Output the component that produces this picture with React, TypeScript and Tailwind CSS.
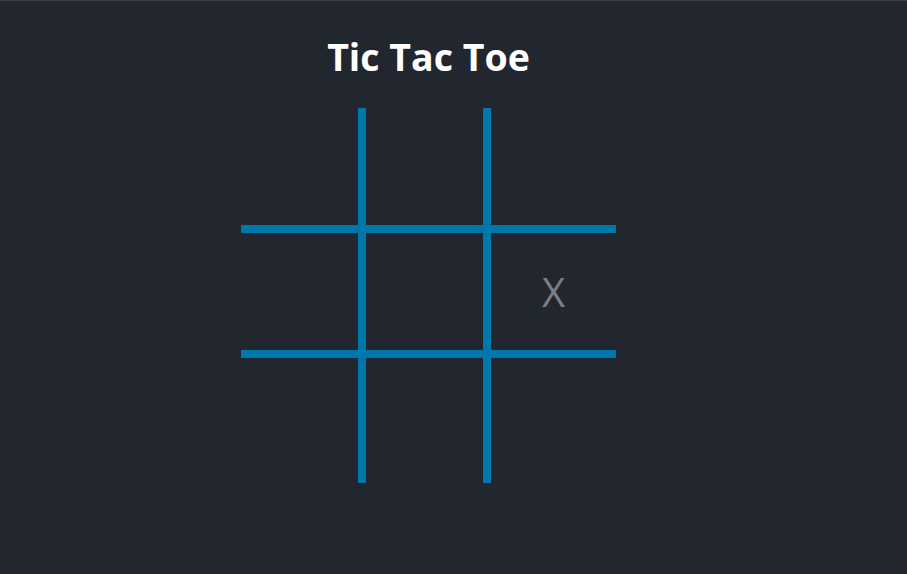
import React from "react";

const cells = ["", "", "", "", "", "X", "", "", ""];

export default function App() {
  return (
    <div className="min-h-[574px] w-full bg-[#22262e] border-t border-[#3b3f46]" style={{ fontFamily: '"Open Sans", "Noto Sans", sans-serif' }}>
      <div className="w-[857px] flex flex-col items-center">
        <h1 className="mt-[31px] text-[37.5px] leading-[50px] font-bold text-white">Tic Tac Toe</h1>
        <div className="mt-[26px] grid grid-cols-[125px_125px_125px] grid-rows-[125px_125px_125px]">
          {cells.map((c, i) => {
            const col = i % 3;
            const row = Math.floor(i / 3);
            const cls =
              (col < 2 ? "border-r-8 " : "") +
              (row < 2 ? "border-b-8 " : "") +
              "border-[#0077ab] flex items-center justify-center text-[40px] font-normal text-[#7b7e84]";
            return (
              <div key={i} className={cls}>
                {c}
              </div>
            );
          })}
        </div>
      </div>
    </div>
  );
}
